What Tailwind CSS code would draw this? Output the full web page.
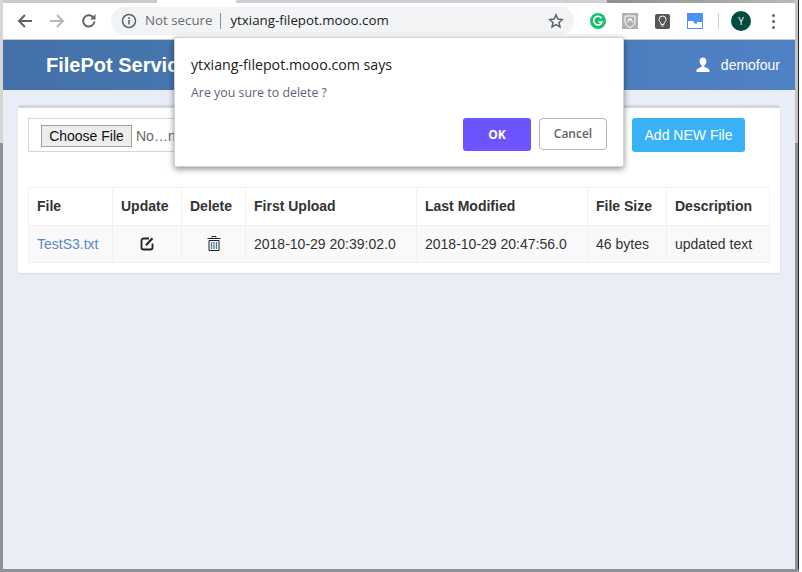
<!DOCTYPE html>
<html lang="en">
<head>
  <meta charset="UTF-8" />
  <title>FilePot Service</title>
  <script src="https://cdn.jsdelivr.net/npm/@tailwindcss/browser@4"></script>
</head>
<body class="bg-white w-[802px] h-[572px] overflow-hidden relative font-['Liberation_Sans',sans-serif]">

  <!-- browser window -->
  <div class="w-[799px] h-[572px] flex flex-col border-l-[3px] border-r-[4px] border-b-[3px] border-[#8e9297] bg-[#e9edf5]">

    <!-- tab strip -->
    <div class="h-[3px] flex bg-white">
      <div class="w-[154px] bg-[#c9cacd]"></div>
      <div class="w-[79px] bg-white"></div>
      <div class="w-[371px] bg-[#cfd0d5]"></div>
      <div class="flex-1 bg-gradient-to-r from-[#8f908c] to-[#b9b9b9]"></div>
    </div>

    <!-- toolbar -->
    <div class="h-[37px] flex items-center bg-white border-b border-[#c8ccd2] font-['Open_Sans',sans-serif]">
      <svg class="ml-[14px]" width="16" height="16" viewBox="0 0 16 16" fill="none" stroke="#5f6368" stroke-width="2"><path d="M15 8H2M8 2L2 8l6 6"/></svg>
      <svg class="ml-[16px]" width="16" height="16" viewBox="0 0 16 16" fill="none" stroke="#b4b6ba" stroke-width="2"><path d="M1 8h13M8 2l6 6-6 6"/></svg>
      <svg class="ml-[16px]" width="16" height="16" viewBox="0 0 16 16" fill="none" stroke="#5f6368" stroke-width="2"><path d="M13.500 8.500A5.700 5.700 0 1 1 12 4"/><path d="M14.500 1v5.500h-5.500" fill="#5f6368" stroke="none"/></svg>

      <div class="ml-[14px] w-[463px] h-[28px] rounded-full bg-[#f1f3f4] flex items-center">
        <svg class="ml-[10px]" width="16" height="16" viewBox="0 0 16 16" fill="none"><circle cx="8" cy="8" r="6.500" stroke="#5f6368" stroke-width="1.500"/><path d="M7.200 7h1.600v4.500H7.200zM7.200 4.300h1.600v1.600H7.200z" fill="#5f6368"/></svg>
        <span class="ml-[8px] text-[13.300px] text-[#6b6e72] leading-none">Not secure</span>
        <span class="ml-[8px] w-px h-[16px] bg-[#8a8d91]"></span>
        <span class="ml-[9px] text-[13.300px] text-[#202124] leading-none">ytxiang-filepot.mooo.com</span>
        <svg class="ml-auto mr-[10px]" width="16" height="16" viewBox="0 0 16 16" fill="none" stroke="#5f6368" stroke-width="1.500"><path d="M8 1.800l1.900 4.200 4.500.5-3.400 3 1 4.500L8 11.700 4 14l1-4.500-3.400-3 4.500-.5z"/></svg>
      </div>

      <!-- extensions -->
      <svg class="ml-[16px]" width="16" height="16" viewBox="0 0 16 16" fill="none"><circle cx="8" cy="8" r="8" fill="#15c26b"/><path d="M11.500 5.200A4.300 4.300 0 1 0 12 9H8.500" stroke="#fff" stroke-width="1.600"/></svg>
      <div class="ml-[16px] w-[16px] h-[16px] bg-[#b1b1b1] flex items-center justify-center">
        <svg width="12" height="13" viewBox="0 0 12 13" fill="none"><path d="M1 1h10v6c0 3-3 4.500-5 5.500C4 11.500 1 10 1 7z" stroke="#fff" stroke-width="1"/><path d="M3.500 7.500L5 3.500l1 2 1-2 1.500 4" stroke="#fff" stroke-width="1"/></svg>
      </div>
      <div class="ml-[17px] w-[15px] h-[15px] rounded-[2px] bg-[#565656] flex items-center justify-center">
        <svg width="9" height="12" viewBox="0 0 9 12" fill="none" stroke="#fff" stroke-width="1"><path d="M3 8C1.800 7 1 6 1 4.500a3.500 3.500 0 0 1 7 0C8 6 7.200 7 6 8v1.500H3zM3.500 11h2"/></svg>
      </div>
      <svg class="ml-[17px]" width="16" height="16" viewBox="0 0 16 16"><rect width="16" height="16" fill="#4d92f7"/><path d="M1 8h5l1.500 2.500H10V9h5v6H1z" fill="#fff"/></svg>
      <span class="ml-[15px] w-px h-[16px] bg-[#cfd1d4]"></span>
      <div class="ml-[12px] w-[20px] h-[20px] rounded-full bg-[#004d40] flex items-center justify-center text-white text-[10px] leading-none">Y</div>
      <div class="ml-[21px] flex flex-col gap-[3px]">
        <span class="w-[3px] h-[3px] rounded-full bg-[#5f6368]"></span>
        <span class="w-[3px] h-[3px] rounded-full bg-[#5f6368]"></span>
        <span class="w-[3px] h-[3px] rounded-full bg-[#5f6368]"></span>
      </div>
    </div>

    <!-- page header -->
    <header class="h-[50px] flex items-center justify-between bg-gradient-to-r from-[#4471a8] to-[#4f81c5] text-white">
      <h1 class="ml-[43px] text-[20px] font-bold leading-none">FilePot Service</h1>
      <div class="mr-[15px] flex items-center">
        <svg width="16" height="16" viewBox="0 0 16 16" fill="#fff"><path d="M8 0.500c2.100 0 3.400 1.600 3.400 3.800 0 1.900-.9 3.500-2.100 4.200v1.400c1.600.7 5.200 1.200 5.200 4V15H1.500v-1.100c0-2.800 3.600-3.300 5.200-4V8.500C5.500 7.800 4.600 6.200 4.600 4.300 4.600 2.100 5.900.5 8 .5z"/></svg>
        <span class="ml-[10px] text-[14px]">demofour</span>
      </div>
    </header>

    <!-- content card -->
    <main class="ml-[15px] mt-[15px] w-[762px] h-[168px] bg-white border-t-[3px] border-[#d5d6e2] rounded-[3px] shadow-[0_1px_2px_rgba(0,0,0,0.08)] px-[10px]">
      <div class="mt-[10px] flex">
        <div class="w-[590px] h-[34px] border border-[#d5d6e2] flex items-center pl-[12px] pt-[2px]">
          <button class="h-[22px] w-[91px] bg-[#ededed] border border-[#a0a0a0] text-[14px] text-[#111] leading-none">Choose File</button>
          <span class="ml-[4px] text-[14px] text-[#666]">No…n</span>
        </div>
        <button class="ml-[14px] w-[113px] h-[34px] rounded-[3px] bg-[#38b1f6] text-white text-[14px]">Add NEW File</button>
      </div>

      <table class="mt-[35px] w-[742px] table-fixed border-collapse text-[14px] text-[#333]">
        <colgroup>
          <col class="w-[84px]" /><col class="w-[69px]" /><col class="w-[64px]" /><col class="w-[171px]" /><col class="w-[171px]" /><col class="w-[79px]" /><col class="w-[103px]" />
        </colgroup>
        <thead>
          <tr class="h-[38px] text-left">
            <th class="border border-[#f2f2f2] pl-[8px] font-bold">File</th>
            <th class="border border-[#f2f2f2] pl-[8px] font-bold">Update</th>
            <th class="border border-[#f2f2f2] pl-[8px] font-bold">Delete</th>
            <th class="border border-[#f2f2f2] pl-[8px] font-bold">First Upload</th>
            <th class="border border-[#f2f2f2] pl-[8px] font-bold">Last Modified</th>
            <th class="border border-[#f2f2f2] pl-[8px] font-bold">File Size</th>
            <th class="border border-[#f2f2f2] pl-[8px] font-bold">Description</th>
          </tr>
        </thead>
        <tbody>
          <tr class="h-[37px] bg-[#f9f9f9]">
            <td class="border border-[#f2f2f2] pl-[8px] text-[#5b87c2]">TestS3.txt</td>
            <td class="border border-[#f2f2f2]">
              <svg class="mx-auto -mt-[2px]" width="15" height="15" viewBox="0 0 15 15" fill="none" stroke="#222" stroke-width="1.800"><path d="M9 2.500H3.500a2 2 0 0 0-2 2v7a2 2 0 0 0 2 2h7a2 2 0 0 0 2-2V7.500"/><path d="M6 9.200l6.500-7" stroke-width="2"/></svg>
            </td>
            <td class="border border-[#f2f2f2]">
              <svg class="mx-auto -mt-[2px]" width="14" height="15" viewBox="0 0 14 15" fill="none" stroke="#222"><path d="M5 1.500V.5h4v1M.5 2.500h13"/><path d="M2 4.500h10V14.500H2z"/><path d="M4.500 6v7M7 6v7M9.500 6v7" stroke="#4d7d9e" stroke-width="1.300"/></svg>
            </td>
            <td class="border border-[#f2f2f2] pl-[8px]">2018-10-29 20:39:02.0</td>
            <td class="border border-[#f2f2f2] pl-[8px]">2018-10-29 20:47:56.0</td>
            <td class="border border-[#f2f2f2] pl-[8px]">46 bytes</td>
            <td class="border border-[#f2f2f2] pl-[8px]">updated text</td>
          </tr>
        </tbody>
      </table>
    </main>
  </div>

  <!-- lighter upper part of the window frame, over the border -->
  <div class="absolute left-0 top-0 w-[3px] h-[143px] bg-[#d6d6d6]"></div>
  <div class="absolute left-[795px] top-0 w-[3px] h-[143px] bg-[#c4c4c4]"></div>
  <div class="absolute left-[798px] top-0 w-px h-[569px] bg-[#222]"></div>

  <!-- confirm dialog -->
  <div class="absolute left-[174px] top-[37px] w-[450px] h-[130px] bg-white rounded-[2px] border border-[#d4d4d4] shadow-[0_2px_6px_rgba(0,0,0,0.45)] font-['Open_Sans',sans-serif]">
    <p class="absolute left-[16px] top-[17px] text-[14.200px] leading-[20px] text-[#202124]">ytxiang-filepot.mooo.com says</p>
    <p class="absolute left-[16px] top-[46px] text-[12.400px] leading-[18px] text-[#6a6078]">Are you sure to delete ?</p>
    <div class="absolute right-[16px] top-[80px] flex gap-[8px]">
      <button class="w-[68px] h-[33px] rounded-[3px] bg-[#6c54ff] text-white text-[12px] font-bold">OK</button>
      <button class="w-[68px] h-[32px] rounded-[4px] bg-white border border-[#b5b5b5] text-[#5f6368] text-[12px] font-semibold">Cancel</button>
    </div>
  </div>
</body>
</html>
